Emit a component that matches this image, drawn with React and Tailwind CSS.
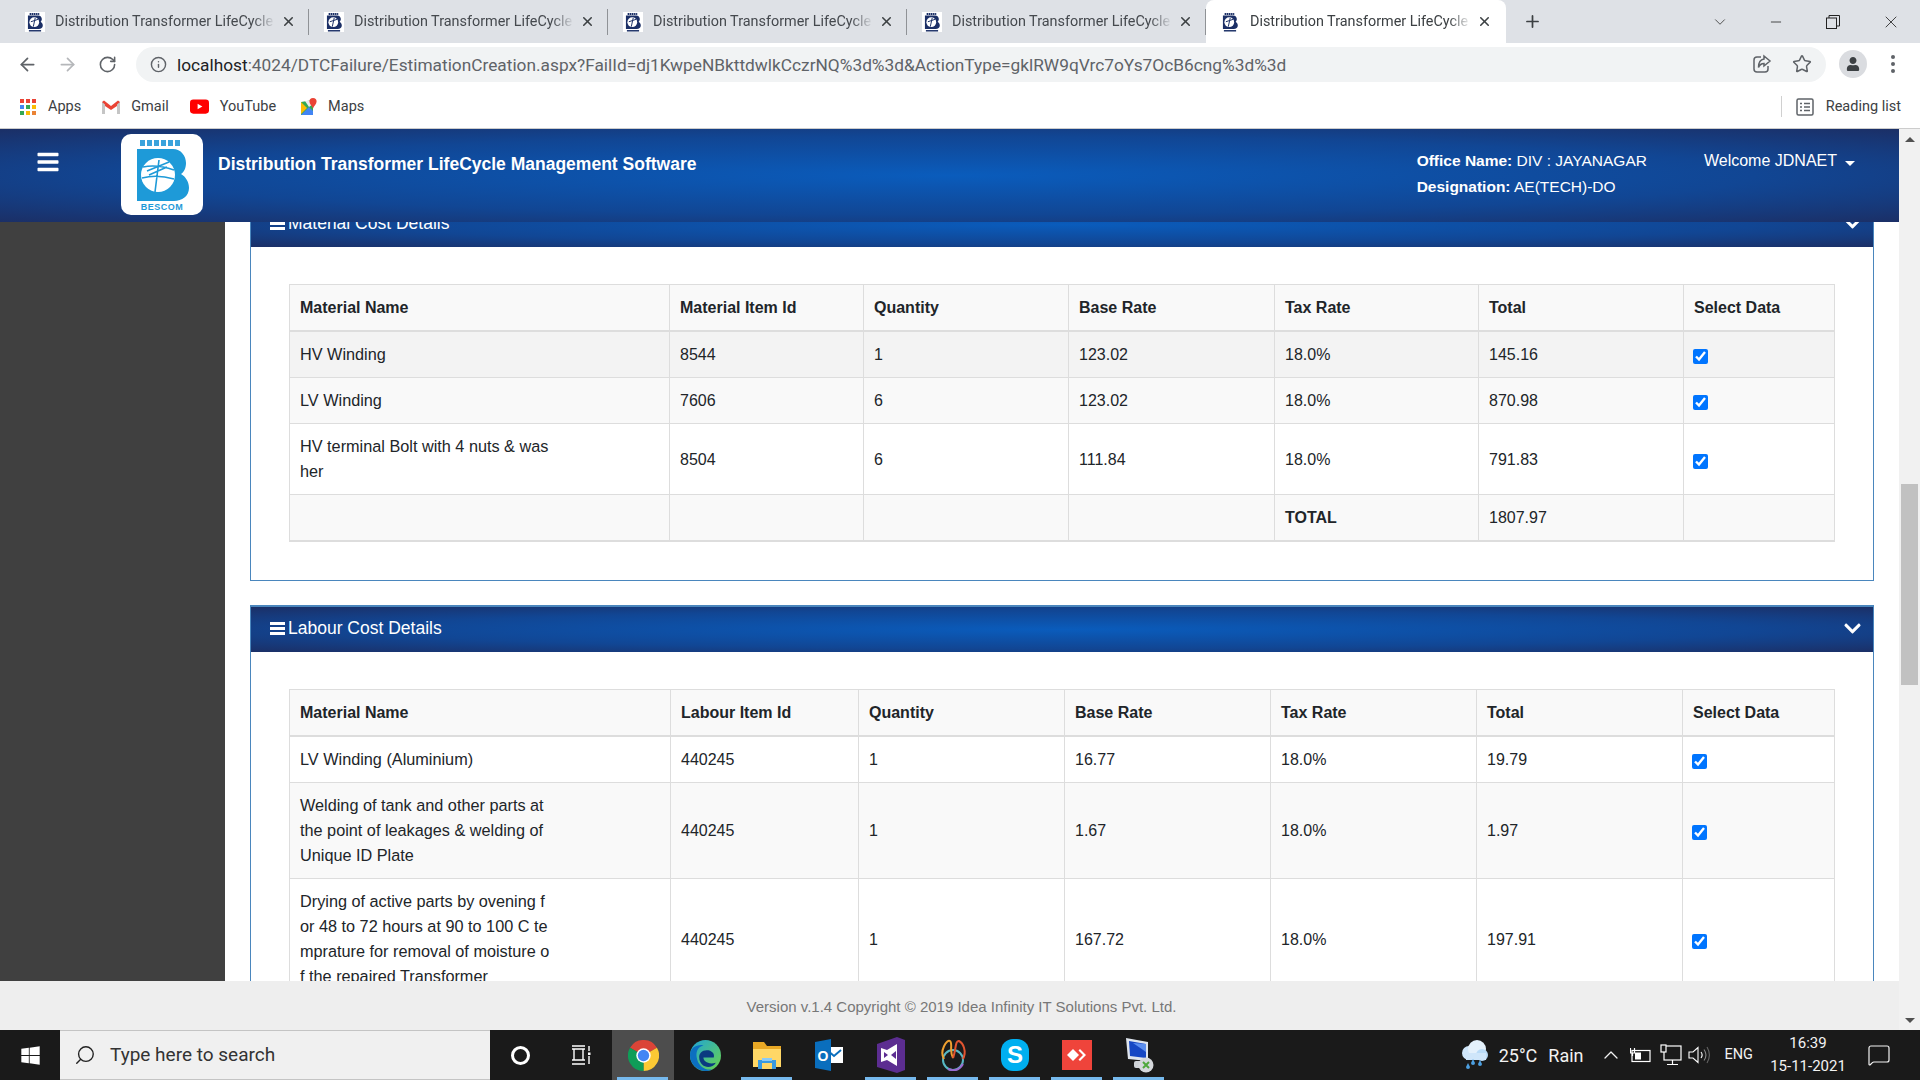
import { ArrowLeft, ArrowRight, RotateCw, Info, Star, X, Plus, ChevronDown, Minus, ChevronUp, Search, MessageSquare } from "lucide-react";
import { FaBars, FaChevronDown, FaWindows, FaUser } from "react-icons/fa";

const materialRows = [
  { name: ["HV Winding"], id: "8544", qty: "1", base: "123.02", tax: "18.0%", total: "145.16", bg: "bg-[#f3f3f3]" },
  { name: ["LV Winding"], id: "7606", qty: "6", base: "123.02", tax: "18.0%", total: "870.98", bg: "bg-[#f9f9f9]" },
  { name: ["HV terminal Bolt with 4 nuts & was", "her"], id: "8504", qty: "6", base: "111.84", tax: "18.0%", total: "791.83", bg: "bg-white" },
];

const labourRows = [
  { name: ["LV Winding (Aluminium)"], id: "440245", qty: "1", base: "16.77", tax: "18.0%", total: "19.79", bg: "bg-white" },
  { name: ["Welding of tank and other parts at", "the point of leakages & welding of", "Unique ID Plate"], id: "440245", qty: "1", base: "1.67", tax: "18.0%", total: "1.97", bg: "bg-[#f9f9f9]" },
  { name: ["Drying of active parts by ovening f", "or 48 to 72 hours at 90 to 100 C te", "mprature for removal of moisture o", "f the repaired Transformer"], id: "440245", qty: "1", base: "167.72", tax: "18.0%", total: "197.91", bg: "bg-white" },
];

const materialCols = ["w-[380px]", "w-[194px]", "w-[205px]", "w-[206px]", "w-[204px]", "w-[205px]", "w-[151px]"];
const labourCols = ["w-[381px]", "w-[188px]", "w-[206px]", "w-[206px]", "w-[206px]", "w-[206px]", "w-[152px]"];

const td = "border border-[#ddd] px-[10px] py-[10px] align-middle";
const th = "border border-[#ddd] border-b-2 px-[10px] py-[10px] text-left font-bold";

function BescomLogo() {
  return (
    <svg viewBox="0 0 82 81" className="w-full h-full">
      <line x1="19" y1="9" x2="59" y2="9" stroke="#3aa3dc" strokeWidth="6" strokeDasharray="5 2" />
      <path d="M16 15 H52 C60 15 65 22 65 29 C65 34 63 38 60 40 C65 43 68 48 68 54 C68 62 61 67 53 67 H16 Z" fill="#1e9ad8" />
      <circle cx="37" cy="41" r="17" fill="#fff" />
      <path d="M38 26 L34 58 M26 37 L48 28 M28 41 L46 33 M22 33 Q36 30 53 36 M21 44 Q36 40 53 45" stroke="#1e9ad8" strokeWidth="1.6" fill="none" />
      <text x="41" y="76" textAnchor="middle" fontFamily="Liberation Sans" fontWeight="700" fontSize="9" letterSpacing="0.5" fill="#1e9ad8">BESCOM</text>
    </svg>
  );
}

function Favicon() {
  return (
    <svg viewBox="0 0 82 82" className="w-5 h-5 shrink-0">
      <rect width="82" height="82" fill="#fff" />
      <line x1="19" y1="8" x2="60" y2="8" stroke="#1b2f66" strokeWidth="8" strokeDasharray="6 2" />
      <path d="M12 14 H54 C63 14 69 21 69 29 C69 34 67 38 64 40 C69 43 73 48 73 55 C73 63 66 70 56 70 H12 Z" fill="#1b2f66" />
      <circle cx="38" cy="42" r="20" fill="#fff" />
      <path d="M42 24 L34 60 M24 40 L54 30" stroke="#1b2f66" strokeWidth="4" />
      <line x1="16" y1="77" x2="66" y2="77" stroke="#1b2f66" strokeWidth="6" />
    </svg>
  );
}

function Tab({ active }) {
  if (active) {
    return (
      <div className="w-[300px] h-[43px] bg-white rounded-t-lg flex items-center pl-[14px] pr-[14px] shrink-0">
        <Favicon />
        <span className="ml-[10px] w-[222px] whitespace-nowrap overflow-hidden text-[14.4px] text-[#3c4043] [mask-image:linear-gradient(to_right,black_90%,transparent)]">
          Distribution Transformer LifeCycle
        </span>
        <X size={15} strokeWidth={2.5} className="ml-[6px] text-[#3c4043] shrink-0" />
      </div>
    );
  }
  return (
    <div className="w-[299px] h-[43px] flex items-center pl-[15px] shrink-0 relative">
      <Favicon />
      <span className="ml-[10px] w-[222px] whitespace-nowrap overflow-hidden text-[14.4px] text-[#45494e] [mask-image:linear-gradient(to_right,black_90%,transparent)]">
        Distribution Transformer LifeCycle
      </span>
      <X size={15} strokeWidth={2.5} className="ml-[6px] text-[#3c4043] shrink-0" />
      <span className="w-px h-[26px] bg-[#8f9296] ml-[12px]" />
    </div>
  );
}

function BrowserChrome() {
  return (
    <>
      <div className="h-[43px] bg-[#dee1e6] flex items-center pl-[10px] font-['Roboto',sans-serif] shrink-0">
        <Tab />
        <Tab />
        <Tab />
        <Tab />
        <Tab active />
        <Plus size={19} strokeWidth={2.2} className="ml-[17px] text-[#3c4043]" />
        <ChevronDown size={18} strokeWidth={1.2} className="ml-[169px] text-[#444]" />
        <Minus size={16} strokeWidth={1.2} className="ml-[39px] text-[#222]" />
        <svg viewBox="0 0 14 14" className="w-[14px] h-[14px] ml-[42px]" fill="none" stroke="#222">
          <rect x="0.5" y="3" width="10" height="10.5" />
          <path d="M3 3 V0.5 H13.5 V11 H10.5" />
        </svg>
        <X size={20} strokeWidth={1} className="ml-[41px] text-[#222]" />
      </div>

      <div className="h-[42px] bg-white flex items-center font-['Roboto',sans-serif] shrink-0">
        <ArrowLeft size={21} className="ml-[17px] text-[#5f6368]" />
        <ArrowRight size={21} className="ml-[19px] text-[#b5b7ba]" />
        <RotateCw size={19} className="ml-[20px] text-[#5f6368]" />
        <div className="ml-[19px] w-[1690px] h-[35px] rounded-full bg-[#f1f3f4] flex items-center pl-[14px] pr-[10px]">
          <Info size={17} className="text-[#5f6368] shrink-0" />
          <span className="ml-[10px] mt-[4px] text-[17.3px] text-[#5f6368] whitespace-nowrap">
            <span className="text-[#202124]">localhost</span>:4024/DTCFailure/EstimationCreation.aspx?FailId=dj1KwpeNBkttdwlkCczrNQ%3d%3d&ActionType=gklRW9qVrc7oYs7OcB6cng%3d%3d
          </span>
          <svg viewBox="0 0 20 20" className="w-[20px] h-[20px] ml-auto" fill="none" stroke="#5f6368" strokeWidth="1.5">
            <path d="M9 3 H5 a3 3 0 0 0 -3 3 V15 a3 3 0 0 0 3 3 H13 a3 3 0 0 0 3 -3 V12" />
            <path d="M12 2 L18 7 L12 12 V9.5 C9 9.5 7.5 11 6.5 13.5 C6.5 9 8.5 5.5 12 5 Z" />
          </svg>
          <Star size={20} strokeWidth={1.8} className="ml-[20px] mr-[4px] text-[#5f6368]" />
        </div>
        <div className="ml-[13px] w-[28px] h-[28px] rounded-full bg-[#dadce0] flex items-center justify-center">
          <FaUser size={14} className="text-[#3c4043]" />
        </div>
        <svg viewBox="0 0 4 18" className="w-[4px] h-[18px] ml-[24px]" fill="#5f6368">
          <circle cx="2" cy="2" r="2" />
          <circle cx="2" cy="9" r="2" />
          <circle cx="2" cy="16" r="2" />
        </svg>
      </div>

      <div className="h-[44px] bg-white border-b border-[#ccc] flex items-center text-[14.5px] text-[#3c4043] font-['Roboto',sans-serif] shrink-0">
        <svg viewBox="0 0 16 16" className="w-[16px] h-[16px] ml-[20px]">
          {[["#ea4335", 0, 0], ["#ea4335", 6, 0], ["#ea4335", 12, 0], ["#4285f4", 0, 6], ["#34a853", 6, 6], ["#fbbc05", 12, 6], ["#34a853", 0, 12], ["#fbbc05", 6, 12], ["#ea8335", 12, 12]].map(([c, x, y], i) => (
            <rect key={i} x={x} y={y} width="4" height="4" fill={c} />
          ))}
        </svg>
        <span className="ml-[12px]">Apps</span>
        <svg viewBox="0 0 20 16" className="w-[20px] h-[16px] ml-[20px]">
          <path d="M1 3 V15 H4 V7 L10 11 L16 7 V15 H19 V3 L17 1.5 L10 7 L3 1.5 Z" fill="#ea4335" />
          <path d="M1 15 V3 L4 5.5 V15 Z M19 15 V3 L16 5.5 V15 Z" fill="#c5c5c5" />
        </svg>
        <span className="ml-[10px]">Gmail</span>
        <svg viewBox="0 0 20 15" className="w-[19px] h-[15px] ml-[21px]">
          <rect width="20" height="15" rx="3.5" fill="#f00" />
          <path d="M8 4.5 L13 7.5 L8 10.5 Z" fill="#fff" />
        </svg>
        <span className="ml-[11px]">YouTube</span>
        <svg viewBox="0 0 18 18" className="w-[18px] h-[18px] ml-[24px]">
          <path d="M1 4 L13 2 V17 L1 17 Z" fill="#34a853" />
          <path d="M1 17 L9 9 L13 13 V17 Z" fill="#4285f4" />
          <path d="M1 4 L7 10 L1 16 Z" fill="#fbbc05" />
          <path d="M5 3 L9 9 L13 6 V2.5 Z" fill="#e8eaed" />
          <path d="M13 0 a3.6 3.6 0 0 1 3.6 3.6 C16.6 6 14 8 13 10.5 C12 8 9.4 6 9.4 3.6 A3.6 3.6 0 0 1 13 0 Z" fill="#ea4335" />
        </svg>
        <span className="ml-[10px]">Maps</span>
        <span className="ml-auto w-px h-[21px] bg-[#d0d0d0]" />
        <svg viewBox="0 0 18 18" className="w-[18px] h-[18px] ml-[14px]" fill="none" stroke="#5f6368" strokeWidth="1.5">
          <rect x="1" y="1" width="16" height="16" rx="1.5" />
          <path d="M4 5.5 H6 M8 5.5 H14 M4 9 H6 M8 9 H14 M4 12.5 H6 M8 12.5 H14" />
        </svg>
        <span className="ml-[12px] mr-[19px]">Reading list</span>
      </div>
    </>
  );
}

function Hamburger() {
  return (
    <span className="w-[15px] flex flex-col gap-[2px]">
      <span className="h-[3px] bg-white" />
      <span className="h-[3px] bg-white" />
      <span className="h-[3px] bg-white" />
    </span>
  );
}

function CostTable({ idLabel, cols, rows, footer }) {
  const headers = ["Material Name", idLabel, "Quantity", "Base Rate", "Tax Rate", "Total", "Select Data"];
  return (
    <table className="w-[1545px] table-fixed border-collapse text-[16px] leading-[25px] text-[#212529]">
      <colgroup>
        {cols.map((c, i) => (
          <col key={i} className={c} />
        ))}
      </colgroup>
      <thead>
        <tr className="bg-[#f9f9f9]">
          {headers.map((h) => (
            <th key={h} className={th}>{h}</th>
          ))}
        </tr>
      </thead>
      <tbody>
        {rows.map((r, i) => (
          <tr key={i} className={r.bg}>
            <td className={`${td} text-[16.25px]`}>
              {r.name.map((line) => (
                <div key={line} className="whitespace-nowrap">{line}</div>
              ))}
            </td>
            <td className={td}>{r.id}</td>
            <td className={td}>{r.qty}</td>
            <td className={td}>{r.base}</td>
            <td className={td}>{r.tax}</td>
            <td className={td}>{r.total}</td>
            <td className={td}>
              <input type="checkbox" defaultChecked className="w-[15px] h-[15px] align-middle mt-[2px] -ml-px" />
            </td>
          </tr>
        ))}
        {footer && (
          <tr className="bg-[#f9f9f9]">
            <td className={`${td} border-b-2`} />
            <td className={`${td} border-b-2`} />
            <td className={`${td} border-b-2`} />
            <td className={`${td} border-b-2`} />
            <td className={`${td} border-b-2 font-bold`}>TOTAL</td>
            <td className={`${td} border-b-2`}>{footer}</td>
            <td className={`${td} border-b-2`} />
          </tr>
        )}
      </tbody>
    </table>
  );
}

function Panel({ title, className, children }) {
  return (
    <section className={`border border-t-2 border-[#4a86bd] ${className}`}>
      <div className="h-[45px] pb-[2px] bg-[radial-gradient(ellipse_at_center,#0a5cbc_0%,#114694_60%,#1b2f66_100%)] flex items-center pl-[19px] pr-[11px] text-white text-[17.5px]">
        <Hamburger />
        <span className="ml-[3px]">{title}</span>
        <FaChevronDown size={19} className="ml-auto" />
      </div>
      <div className="pl-[38px] pr-[37px] pt-[37px] pb-[38px]">{children}</div>
    </section>
  );
}

function AppHeader() {
  return (
    <header className="h-[93px] shrink-0 bg-[radial-gradient(ellipse_at_center,#0a5cbc_0%,#114694_60%,#1b2f66_100%)] text-white flex items-start">
      <FaBars size={24} className="ml-[36px] mt-[21px]" />
      <div className="ml-[61px] mt-[5px] w-[82px] h-[81px] bg-white rounded-[10px]">
        <BescomLogo />
      </div>
      <h1 className="ml-[15px] mt-[22px] text-[17.5px] font-bold">Distribution Transformer LifeCycle Management Software</h1>
      <div className="ml-auto pt-[19px] text-[15.5px] leading-[26px]">
        <p><b>Office Name:</b> DIV : JAYANAGAR</p>
        <p><b>Designation:</b> AE(TECH)-DO</p>
      </div>
      <div className="ml-[57px] mr-[44px] pt-[19px] text-[16px] leading-[26px] flex items-center">
        Welcome JDNAET
        <span className="ml-[8px] mt-[5px] w-0 h-0 border-x-[5px] border-x-transparent border-t-[5px] border-t-white" />
      </div>
    </header>
  );
}

function Scrollbar() {
  return (
    <div className="w-[21px] bg-[#f1f1f1] flex flex-col items-center shrink-0 relative">
      <span className="mt-[8px] w-0 h-0 border-x-[5px] border-x-transparent border-b-[5px] border-b-[#505050]" />
      <div className="absolute top-[355px] left-[2px] w-[17px] h-[201px] bg-[#c1c1c1]" />
      <span className="mt-auto mb-[7px] w-0 h-0 border-x-[5px] border-x-transparent border-t-[5px] border-t-[#505050]" />
    </div>
  );
}

function AppSlot({ children, active, open }) {
  return (
    <div className={`w-[62px] h-full flex items-center justify-center relative shrink-0 ${active ? "bg-[#4d4d4d]" : ""}`}>
      {children}
      {open && <span className="absolute bottom-0 left-[5px] right-[6px] h-[3px] bg-[#76b9ed]" />}
    </div>
  );
}

function Taskbar() {
  return (
    <div className="h-[50px] bg-[#1a1a1a] flex items-center shrink-0 font-['Roboto',sans-serif] text-[#f2f2f2]">
      <div className="w-[60px] flex justify-center">
        <FaWindows size={21} className="text-white" />
      </div>
      <div className="w-[430px] h-full bg-[#f0f0f0] border-y border-[#c4c4c4] flex items-center pl-[14px] text-[19px] text-[#333]">
        <Search size={22} strokeWidth={1.5} className="-scale-x-100 text-[#222]" />
        <span className="ml-[14px]">Type here to search</span>
      </div>
      <div className="w-[60px] flex justify-center">
        <span className="w-[19px] h-[19px] rounded-full border-[3px] border-white" />
      </div>
      <div className="w-[62px] flex justify-center">
        <svg viewBox="0 0 20 20" className="w-[20px] h-[20px]" fill="none" stroke="#fff" strokeWidth="1.4">
          <path d="M1 1 H14 M1 4 H14 M3 4 V15 M12 4 V15 M1 15 H14 M1 19 H14 M18 1 V6 M18 11 V19" />
          <rect x="17" y="7.5" width="2.5" height="2.5" fill="#fff" stroke="none" />
        </svg>
      </div>

      <AppSlot active open>
        <svg viewBox="0 0 24 24" className="w-[31px] h-[31px]">
          <path d="M12 12 L1.6 6 A12 12 0 0 1 22.4 6 Z" fill="#db4437" />
          <path d="M12 12 L22.4 6 A12 12 0 0 1 12 24 Z" fill="#fcc934" />
          <path d="M12 12 L12 24 A12 12 0 0 1 1.6 6 Z" fill="#0f9d58" />
          <circle cx="12" cy="12" r="5.6" fill="#fff" />
          <circle cx="12" cy="12" r="4.4" fill="#4285f4" />
        </svg>
      </AppSlot>
      <AppSlot>
        <svg viewBox="0 0 30 30" className="w-[31px] h-[31px]">
          <defs>
            <linearGradient id="edgeTop" x1="0" y1="0" x2="1" y2="1">
              <stop offset="0" stopColor="#1fa4d8" />
              <stop offset="1" stopColor="#6bd44a" />
            </linearGradient>
          </defs>
          <circle cx="15" cy="15" r="15" fill="url(#edgeTop)" />
          <path d="M0 15 C0 7 7 4 13 5 C7 7 5 12 7 19 C9 26 16 30 22 28 C19 30 17 30 15 30 C7 30 0 23 0 15 Z" fill="#0c6fc0" />
          <path d="M9 18 C8 12 13 9 18 10 C22 11 24 14 23 17 H13 C13 21 18 24 25 22 C22 27 15 27 12 24 C10 22 9 20 9 18 Z" fill="#0b3a80" />
        </svg>
      </AppSlot>
      <AppSlot open>
        <svg viewBox="0 0 28 28" className="w-[28px] h-[28px]">
          <path d="M0 1 H11 L14 5 H28 V26 H0 Z" fill="#e8a825" />
          <rect y="8" width="28" height="18" fill="#ffd766" />
          <rect x="5" y="19" width="18" height="9" fill="#3a9ae0" />
          <rect x="9" y="22" width="10" height="6" fill="#ffd766" />
          <rect x="9" y="17" width="10" height="3" fill="#8ccbf5" />
        </svg>
      </AppSlot>
      <AppSlot>
        <svg viewBox="0 0 28 32" className="w-[28px] h-[32px]">
          <rect x="10" y="8" width="18" height="16" fill="#fff" />
          <path d="M12 11 L19 17 L26 11" stroke="#0a6ebd" strokeWidth="2" fill="none" />
          <path d="M0 3 L16 0 V32 L0 29 Z" fill="#0a6ebd" />
          <text x="8" y="22" textAnchor="middle" fontFamily="Liberation Sans" fontWeight="700" fontSize="14" fill="#fff">O</text>
        </svg>
      </AppSlot>
      <AppSlot open>
        <svg viewBox="0 0 28 36" className="w-[28px] h-[36px]">
          <path d="M0 7 L20 0 L28 3 V33 L20 36 L0 30 Z" fill="#5c2d91" />
          <path d="M4 11 L10 13 L20 7 V29 L10 23 L4 25 Z M7 15 V21 L11 18 Z M14 18 L19 22 V14 Z" fill="#fff" fillRule="evenodd" />
        </svg>
      </AppSlot>
      <AppSlot open>
        <svg viewBox="0 0 28 32" className="w-[28px] h-[32px]" fill="none" strokeWidth="2">
          <circle cx="14" cy="21" r="10" stroke="#57b8c4" />
          <path d="M5 20 C0 12 8 0 11 2 C14 4 10 12 14 19" stroke="#f0a030" />
          <path d="M14 19 C17 12 16 1 20 2 C24 4 28 12 24 20" stroke="#e25530" />
          <path d="M9 30 C14 32 20 32 24 25" stroke="#9a6bd0" />
        </svg>
      </AppSlot>
      <AppSlot open>
        <div className="w-[28px] h-[32px] rounded-[12px] bg-[#00aff0] flex items-center justify-center font-['Liberation_Sans',sans-serif] font-bold text-[24px] text-white">S</div>
      </AppSlot>
      <AppSlot open>
        <div className="w-[30px] h-[30px] bg-[#ef443b] flex items-center justify-center">
          <svg viewBox="0 0 20 14" className="w-[20px] h-[14px]" fill="#fff">
            <path d="M6 1 L12 7 L6 13 L0 7 Z" />
            <path d="M13 1 L19 7 L13 13 L11.5 11.5 L16 7 L11.5 2.5 Z" />
          </svg>
        </div>
      </AppSlot>
      <AppSlot open>
        <svg viewBox="0 0 30 36" className="w-[30px] h-[36px]">
          <path d="M2 1 L24 5 V24 L4 22 Z" fill="#dfe5ee" />
          <path d="M5 4 L22 7 V21 L6 19 Z" fill="#1647c4" />
          <path d="M9 6 L22 7 V15 Z" fill="#5c8ff0" />
          <rect x="10" y="24" width="8" height="7" rx="2" fill="#cfd3d8" />
          <circle cx="22" cy="28" r="7.5" fill="#d5d8dc" />
          <path d="M19 25 L25 31 M25 25 L19 31" stroke="#4fa83d" strokeWidth="2" />
        </svg>
      </AppSlot>

      <div className="ml-auto flex items-center h-full">
        <svg viewBox="0 0 28 32" className="w-[28px] h-[32px]">
          <circle cx="9" cy="14" r="7" fill="#cfe6fa" />
          <circle cx="17" cy="10" r="9" fill="#e4f1fc" />
          <circle cx="22" cy="16" r="6" fill="#b9dbf7" />
          <rect x="6" y="14" width="20" height="7" fill="#cfe6fa" />
          <path d="M8 24 l2 4 a2 2 0 1 1 -4 0 Z M13 20 l2 4 a2 2 0 1 1 -4 0 Z M20 21 l2 4 a2 2 0 1 1 -4 0 Z" fill="#4c9fe0" />
        </svg>
        <span className="ml-[11px] text-[18px]">25°C</span>
        <span className="ml-[11px] text-[18px]">Rain</span>
        <ChevronUp size={24} strokeWidth={1.3} className="ml-[15px]" />
        <svg viewBox="0 0 22 16" className="w-[22px] h-[16px] ml-[7px]" fill="none" stroke="#fff" strokeWidth="1.2">
          <rect x="2" y="3.5" width="18" height="11" />
          <rect x="5" y="5.5" width="6" height="7" fill="#fff" stroke="none" />
          <path d="M0.5 1 V6 H4.5 V1 M2.5 6 V9" />
        </svg>
        <svg viewBox="0 0 22 22" className="w-[22px] h-[22px] ml-[8px]" fill="none" stroke="#fff" strokeWidth="1.2">
          <rect x="4" y="2" width="17" height="14" />
          <rect x="1" y="1" width="5" height="7" fill="#1a1a1a" />
          <path d="M12.5 16 V20 M7 20.5 H18" />
        </svg>
        <svg viewBox="0 0 22 22" className="w-[22px] h-[22px] ml-[6px]" fill="none" stroke="#fff" strokeWidth="1.1">
          <path d="M1 8 H5 L10 3.5 V18.5 L5 14 H1 Z" />
          <path d="M13 8 C14.5 10 14.5 12 13 14" />
          <path d="M16 5.5 C18.5 9 18.5 13 16 16.5" stroke="#888" />
          <path d="M19 3 C22 8 22 14 19 19" stroke="#666" />
        </svg>
        <span className="ml-[15px] text-[14.5px]">ENG</span>
        <div className="ml-[17px] w-[76px] flex flex-col items-center text-[15px] leading-[23px]">
          <span>16:39</span>
          <span className="whitespace-nowrap">15-11-2021</span>
        </div>
        <MessageSquare size={24} strokeWidth={1.2} className="ml-[21px] mr-[29px]" />
      </div>
    </div>
  );
}

export default function App() {
  return (
    <div className="h-screen flex flex-col overflow-hidden font-['Liberation_Sans',Arial,sans-serif]">
      <BrowserChrome />
      <div className="flex-1 flex min-h-0">
        <div className="flex-1 flex flex-col min-w-0">
          <AppHeader />
          <div className="flex-1 flex min-h-0 bg-white">
            <aside className="w-[225px] bg-[#404040] shrink-0" />
            <main className="flex-1 min-w-0 overflow-hidden pl-[25px] pr-[25px]">
              <Panel title="Material Cost Details" className="-mt-[22px]">
                <CostTable idLabel="Material Item Id" cols={materialCols} rows={materialRows} footer="1807.97" />
              </Panel>
              <Panel title="Labour Cost Details" className="mt-[24px]">
                <CostTable idLabel="Labour Item Id" cols={labourCols} rows={labourRows} />
              </Panel>
            </main>
          </div>
          <footer className="h-[49px] shrink-0 bg-[#eee] flex items-center justify-center pl-[24px] pt-[3px] text-[15px] text-[#777]">
            Version v.1.4 Copyright © 2019 Idea Infinity IT Solutions Pvt. Ltd.
          </footer>
        </div>
        <Scrollbar />
      </div>
      <Taskbar />
    </div>
  );
}
